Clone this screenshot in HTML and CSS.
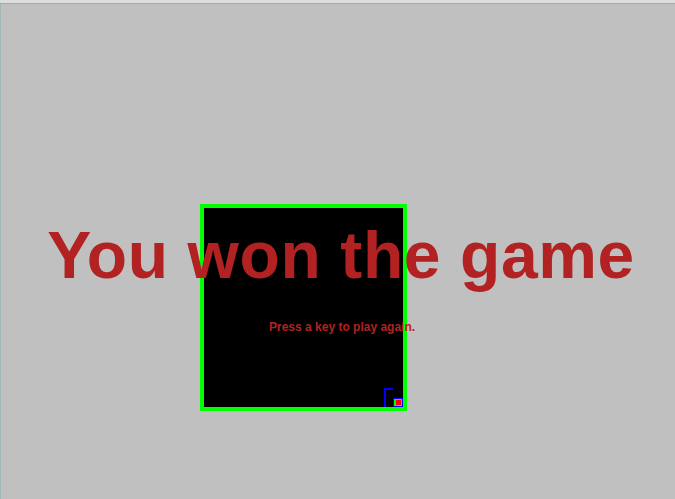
FILE: index.html
```html
<!DOCTYPE html>
<html>
<head>
<meta charset="utf-8">
<link rel="stylesheet" href="styles.css">
</head>
<body>
<div class="titlebar"></div>
<div class="stage">
  <div class="board">
    <div class="corner"></div>
    <div class="player"><div class="dot"></div></div>
  </div>
  <div class="title">You won the game</div>
  <div class="hint">Press a key to play again.</div>
</div>
</body>
</html>
```
FILE: styles.css
```css
html, body {
  margin: 0;
  padding: 0;
  width: 675px;
  height: 499px;
  overflow: hidden;
  background: #c0c0c0;
  font-family: "Liberation Sans", Arial, sans-serif;
}
.titlebar {
  height: 3px;
  background: #dedede;
  border-bottom: 1px solid #a9a9a9;
}
.stage {
  position: relative;
  height: 495px;
  border-left: 1px solid #9fb8b8;
  box-sizing: border-box;
  padding: 200px 0 0 199px;
}
.board {
  position: relative;
  width: 199px;
  height: 199px;
  background: #000;
  border: 4px solid #00ff00;
}
.corner {
  position: absolute;
  left: 180px;
  top: 180px;
  width: 9px;
  height: 19px;
  border-left: 2px solid #0000ff;
  border-top: 2px solid #0000ff;
  box-sizing: border-box;
}
.player {
  position: absolute;
  left: 189px;
  top: 190px;
  width: 10px;
  height: 9px;
  border: 1px solid #0000ff;
  background: #00ff00;
  box-sizing: border-box;
  display: flex;
  align-items: center;
  justify-content: center;
}
.dot {
  width: 5px;
  height: 5px;
  background: #ff0000;
}
.title {
  position: absolute;
  left: 0;
  right: 0;
  top: 218px;
  padding-left: 6px;
  text-align: center;
  font-size: 66px;
  line-height: 1;
  font-weight: bold;
  letter-spacing: 0.6px;
  color: #b22222;
  white-space: nowrap;
}
.hint {
  position: absolute;
  left: 268px;
  top: 317px;
  font-size: 12px;
  line-height: 1;
  font-weight: bold;
  color: #b22222;
  white-space: nowrap;
}
```
